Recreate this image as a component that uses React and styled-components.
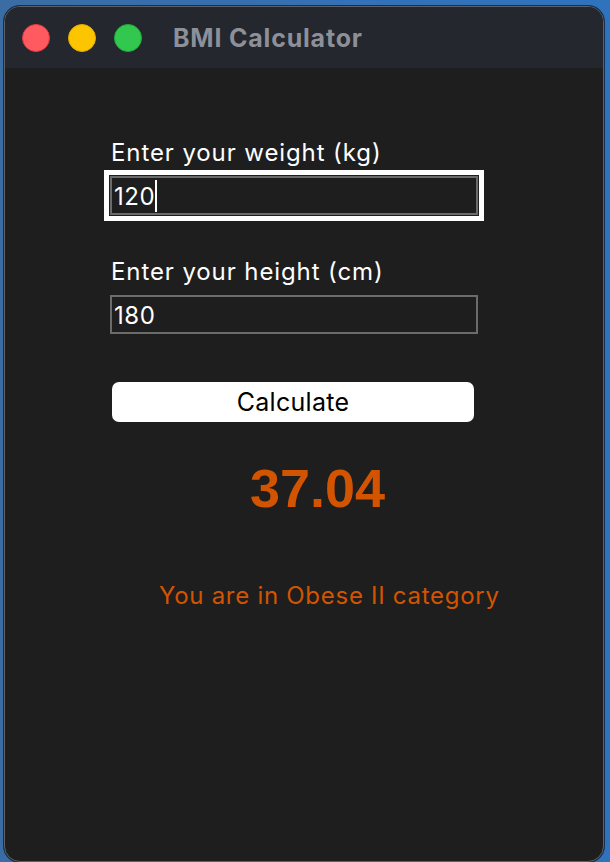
import React from "react";
import styled, { createGlobalStyle } from "styled-components";

const Global = createGlobalStyle`
  html, body {
    margin: 0;
    padding: 0;
    height: 100%;
    background: linear-gradient(90deg, #3a6da3 0%, #3471b6 60%, #2f73bd 100%);
    overflow: hidden;
  }
  #root { height: 100%; }
`;

const Desktop = styled.div`
  height: 100%;
  box-sizing: border-box;
  padding: 6px 6px 0 4px;
  display: flex;
`;

const Window = styled.div`
  flex: 1;
  height: 856px;
  box-sizing: border-box;
  border: 1px solid #5d6066;
  box-shadow: 0 0 0 1px rgba(10, 20, 35, 0.7);
  border-radius: 16px;
  background: #1e1e1e;
  overflow: hidden;
  display: flex;
  flex-direction: column;
`;

const TitleBar = styled.div`
  height: 61px;
  flex: none;
  background: #24272e;
  display: flex;
  align-items: center;
  padding-left: 17px;
  gap: 18px;
`;

const Light = styled.span`
  width: 28px;
  height: 28px;
  border-radius: 50%;
  box-sizing: border-box;
  background: ${(p) => p.$fill};
  border: 1px solid ${(p) => p.$edge};
  flex: none;
`;

const Title = styled.div`
  margin-left: 13px;
  font-family: Inter, "Liberation Sans", sans-serif;
  font-weight: 700;
  font-size: 25px;
  line-height: 30px;
  color: #8d9098;
  letter-spacing: 0.8px;
`;

const Content = styled.div`
  flex: 1;
  display: flex;
  flex-direction: column;
  align-items: flex-start;
  padding: 71px 0 0 105px;
`;

const Label = styled.div`
  font-family: Inter, "Liberation Sans", sans-serif;
  font-size: 24px;
  line-height: 28px;
  color: #ffffff;
  letter-spacing: 0.9px;
  margin-left: 1px;
  margin-top: ${(p) => p.$top || 0}px;
`;

const Entry = styled.div`
  margin-top: 9px;
  width: 368px;
  height: 39px;
  box-sizing: border-box;
  border: 2px solid #6b6b6b;
  background: #1e1e1e;
  display: flex;
  align-items: center;
  padding: 2px 0 0 2px;
  font-family: Inter, "Liberation Sans", sans-serif;
  font-size: 24px;
  line-height: 33px;
  color: #ffffff;
  letter-spacing: 0.6px;
  outline: ${(p) => (p.$focused ? "5px solid #ffffff" : "none")};
  outline-offset: 1px;
`;

const Caret = styled.span`
  display: inline-block;
  width: 2px;
  height: 32px;
  margin-top: -2px;
  background: #ffffff;
`;

const Button = styled.div`
  margin-top: 48px;
  margin-left: 2px;
  width: 362px;
  height: 40px;
  border-radius: 7px;
  background: #ffffff;
  color: #000000;
  display: flex;
  align-items: center;
  justify-content: center;
  font-family: Inter, "Liberation Sans", sans-serif;
  font-size: 25px;
  letter-spacing: 0.3px;
`;

const Score = styled.div`
  margin-top: 34px;
  margin-left: 140px;
  font-family: "Liberation Sans", Arial, sans-serif;
  font-weight: 700;
  font-size: 54px;
  line-height: 64px;
  color: #d35400;
`;

const Category = styled.div`
  margin-top: 61px;
  margin-left: 49px;
  font-family: Inter, "Liberation Sans", sans-serif;
  font-size: 24px;
  line-height: 30px;
  color: #d35400;
  letter-spacing: 0.72px;
`;

export default function App() {
  return (
    <>
      <Global />
      <Desktop>
        <Window>
          <TitleBar>
            <Light $fill="#ff5a5f" $edge="#e13c3f" />
            <Light $fill="#fdc500" $edge="#e0ac00" />
            <Light $fill="#32c850" $edge="#1fae37" />
            <Title>BMI Calculator</Title>
          </TitleBar>
          <Content>
            <Label>Enter your weight (kg)</Label>
            <Entry $focused>
              120
              <Caret />
            </Entry>
            <Label $top={43}>Enter your height (cm)</Label>
            <Entry>180</Entry>
            <Button>Calculate</Button>
            <Score>37.04</Score>
            <Category>You are in Obese II category</Category>
          </Content>
        </Window>
      </Desktop>
    </>
  );
}
